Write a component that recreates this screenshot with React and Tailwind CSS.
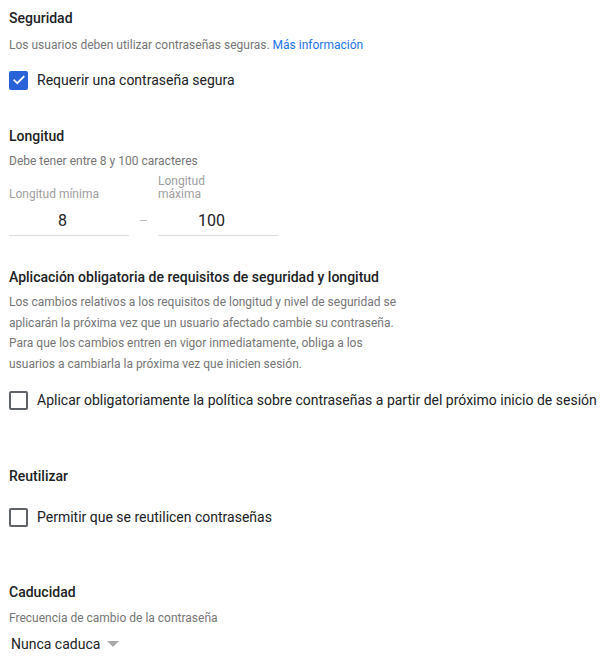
const font = { fontFamily: 'Roboto, "Noto Sans", sans-serif' };

function Heading({ children, className = '' }) {
  return (
    <h2 className={`text-[14px] leading-[20px] font-medium text-[#202124] ${className}`}>
      {children}
    </h2>
  );
}

function Hint({ children, className = '' }) {
  return <p className={`text-[12px] leading-[20px] text-[#757575] ${className}`}>{children}</p>;
}

function Checkbox({ checked, label, className = '' }) {
  return (
    <label className={`flex items-center h-[20px] ${className}`}>
      {checked ? (
        <span className="w-[19px] h-[19px] rounded-[2px] bg-[#2962d8] flex items-center justify-center shrink-0">
          <svg width="14" height="14" viewBox="0 0 24 24" fill="none">
            <path d="M4 12.5l5 5L20 6.5" stroke="#fff" strokeWidth="3" strokeLinecap="square" />
          </svg>
        </span>
      ) : (
        <span className="w-[19px] h-[19px] rounded-[2px] border-2 border-[#5f6368] shrink-0" />
      )}
      <span className="ml-[9px] text-[14px] text-[#202124] whitespace-nowrap">{label}</span>
    </label>
  );
}

function LengthInput({ label, value }) {
  return (
    <div className="w-[120px] flex flex-col">
      <div className="h-[27px] flex items-end text-[12px] leading-[13px] text-[#9e9e9e]">{label}</div>
      <div className="pt-[9px] pb-[3px] pr-[13px] text-[16px] leading-[22px] text-[#202124] text-center border-b border-[#dadce0]">
        {value}
      </div>
    </div>
  );
}

export default function App() {
  return (
    <div className="bg-white w-[600px] h-[658px] overflow-hidden pl-[9px] pt-[8px]" style={font}>
      <Heading>Seguridad</Heading>
      <Hint className="mt-[7px]">
        Los usuarios deben utilizar contraseñas seguras.{' '}
        <a className="text-[#1a73e8]" href="#">Más información</a>
      </Hint>
      <Checkbox checked className="mt-[15px]" label="Requerir una contraseña segura" />

      <Heading className="mt-[36px]">Longitud</Heading>
      <Hint className="mt-[5px]">Debe tener entre 8 y 100 caracteres</Hint>
      <div className="flex items-end mt-[3px]">
        <LengthInput label="Longitud mínima" value="8" />
        <div className="w-[29px] flex justify-center pb-[15px]">
          <span className="w-[7px] h-[1.5px] bg-[#bdbdbd]" />
        </div>
        <LengthInput label={<span>Longitud<br />máxima</span>} value="100" />
      </div>

      <Heading className="mt-[31px]">Aplicación obligatoria de requisitos de seguridad y longitud</Heading>
      <p className="mt-[5px] text-[12px] leading-[20.6px] text-[#757575]">
        Los cambios relativos a los requisitos de longitud y nivel de seguridad se
        <br />
        aplicarán la próxima vez que un usuario afectado cambie su contraseña.
        <br />
        Para que los cambios entren en vigor inmediatamente, obliga a los
        <br />
        usuarios a cambiarla la próxima vez que inicien sesión.
      </p>
      <Checkbox
        className="mt-[16px]"
        label="Aplicar obligatoriamente la política sobre contraseñas a partir del próximo inicio de sesión"
      />

      <Heading className="mt-[56px]">Reutilizar</Heading>
      <Checkbox className="mt-[21px]" label="Permitir que se reutilicen contraseñas" />

      <Heading className="mt-[55px]">Caducidad</Heading>
      <Hint className="mt-[6px]">Frecuencia de cambio de la contraseña</Hint>
      <div className="mt-[6px] ml-[2px] flex items-center h-[20px]">
        <span className="text-[14px] text-[#202124]">Nunca caduca</span>
        <svg className="ml-[7px]" width="12" height="6" viewBox="0 0 12 6">
          <path d="M0 0h12L6 6z" fill="#a8a8a8" />
        </svg>
      </div>
    </div>
  );
}
